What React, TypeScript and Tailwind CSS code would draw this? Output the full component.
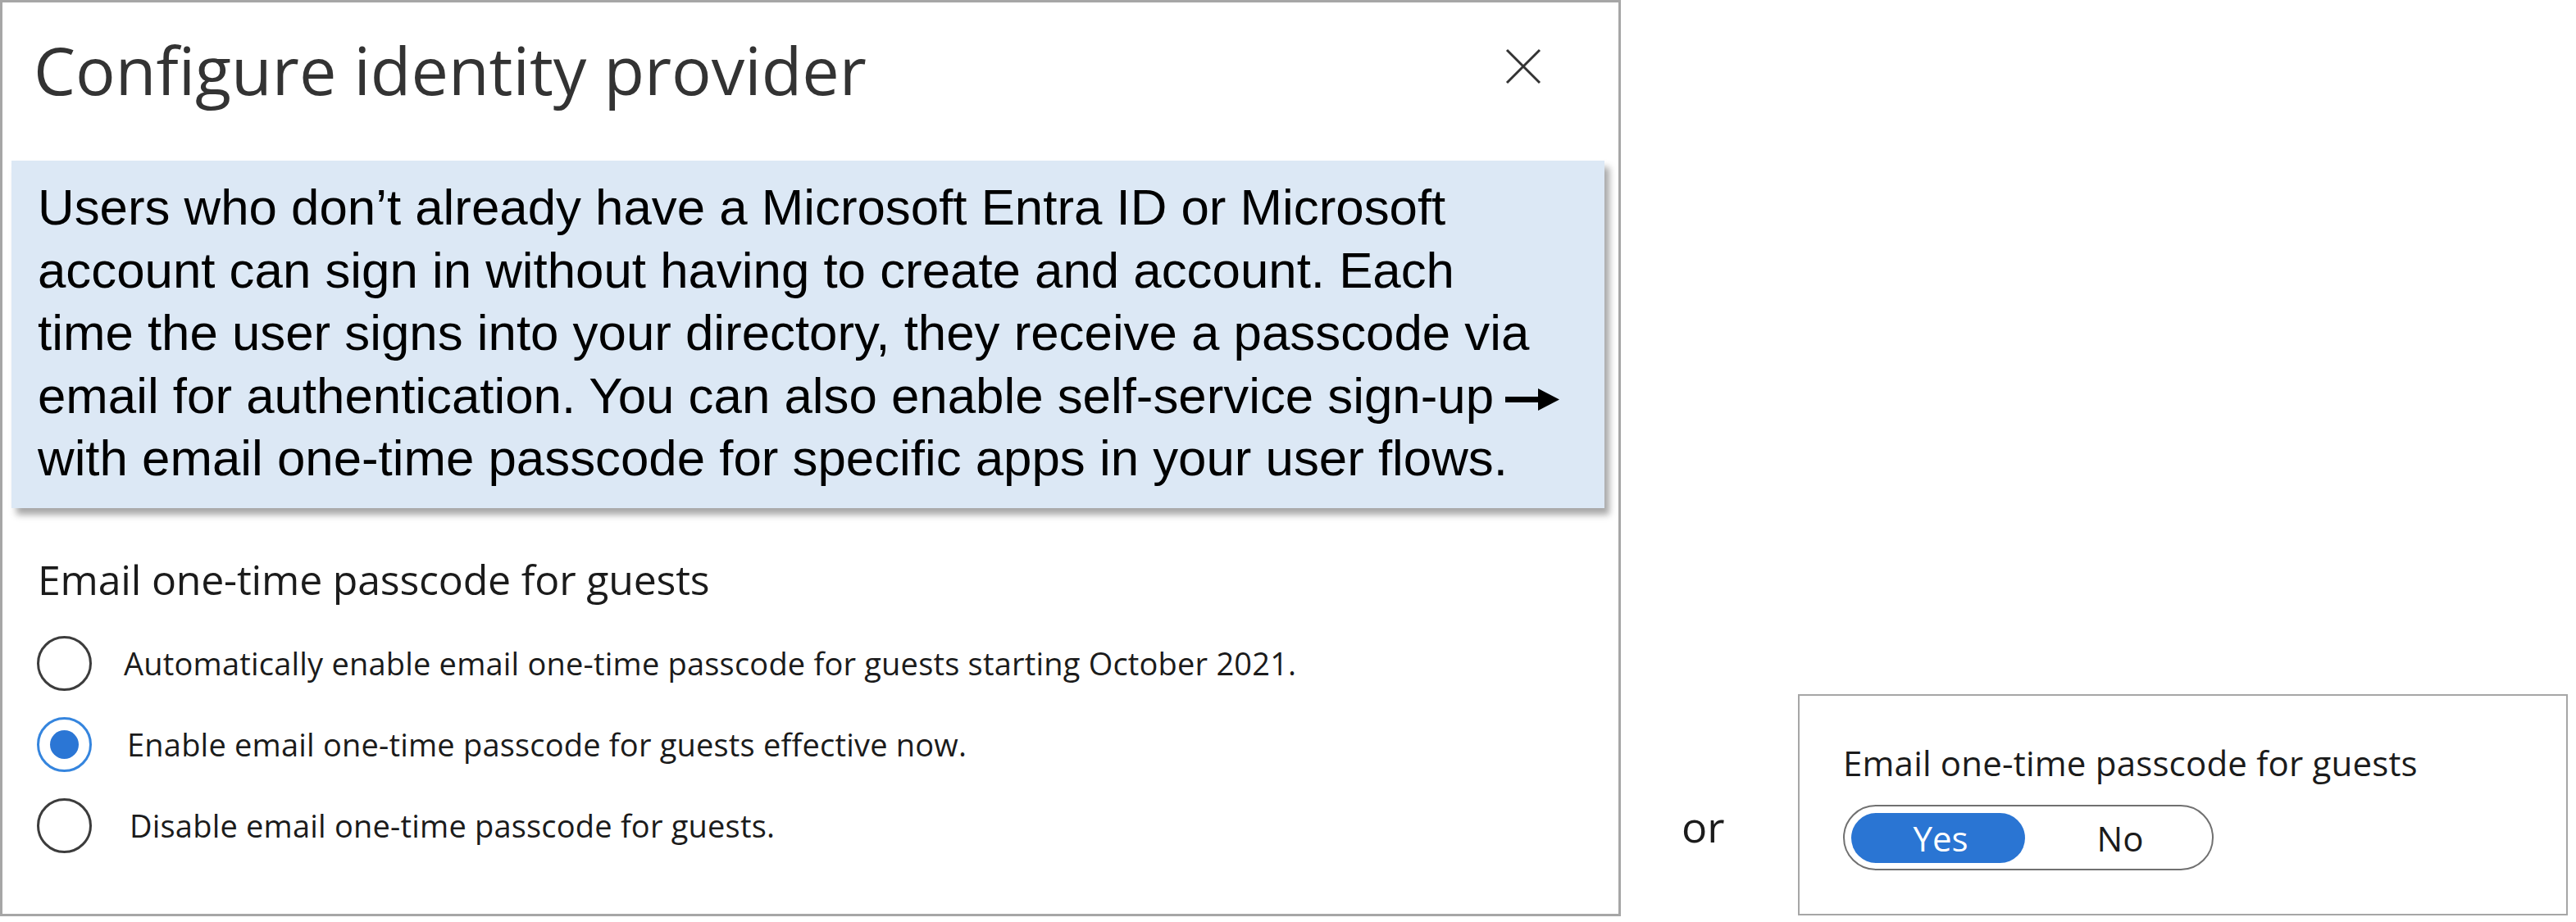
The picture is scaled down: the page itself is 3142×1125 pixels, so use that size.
const ui = { fontFamily: '"Open Sans", "Noto Sans", sans-serif' };
const note = { fontFamily: '"Liberation Sans", Arial, sans-serif' };

const noteLines = [
  "Users who don’t already have a Microsoft Entra ID or Microsoft",
  "account can sign in without having to create and account. Each",
  "time the user signs into your directory, they receive a passcode via",
  "email for authentication. You can also enable self-service sign-up",
  "with email one-time passcode for specific apps in your user flows.",
];

const options = [
  { label: "Automatically enable email one-time passcode for guests starting October 2021.", checked: false, gap: "ml-[39px]" },
  { label: "Enable email one-time passcode for guests effective now.", checked: true, gap: "ml-[43px]" },
  { label: "Disable email one-time passcode for guests.", checked: false, gap: "ml-[46px]" },
];

function Radio({ checked }: { checked: boolean }) {
  if (checked) {
    return (
      <span className="flex h-[67px] w-[67px] shrink-0 items-center justify-center rounded-full border-[3px] border-[#3585de]">
        <span className="h-[35px] w-[35px] rounded-full bg-[#2b76d5]" />
      </span>
    );
  }
  return <span className="h-[67px] w-[67px] shrink-0 rounded-full border-[3px] border-[#3c3c3c]" />;
}

function Arrow() {
  return (
    <svg width="66" height="30" viewBox="0 0 66 30" className="ml-[14px] inline-block align-middle">
      <rect x="0" y="12" width="44" height="7" fill="#000" />
      <polygon points="40,2 66,15.5 40,29" fill="#000" />
    </svg>
  );
}

export default function App() {
  return (
    <div className="flex h-[1125px] w-[3142px] bg-white">
      {/* dialog */}
      <div className="flex h-[1118px] w-[1977px] shrink-0 flex-col border-[3px] border-[#a6a6a6]" style={ui}>
        <div className="flex items-center justify-between pl-[38px] pr-[94px] pt-[32px]">
          <h1 className="text-[81px] leading-[100px] text-[#333333]">Configure identity provider</h1>
          <svg width="44" height="44" viewBox="0 0 44 44" className="mb-[8px]">
            <path d="M2 2 L42 42 M42 2 L2 42" stroke="#333" strokeWidth="3" fill="none" />
          </svg>
        </div>

        <div
          className="ml-[11px] mr-[17px] mt-[61px] bg-[#dce8f5] pb-[22px] pl-[32px] pt-[19px] text-[61.8px] leading-[76.5px] text-black shadow-[6px_8px_8px_rgba(0,0,0,0.35)]"
          style={note}
        >
          {noteLines.map((l, i) => (
            <div key={i} className="whitespace-nowrap">
              {l}
              {i === 3 && <Arrow />}
            </div>
          ))}
        </div>

        <h2 className="ml-[43px] mt-[53px] text-[50px] leading-[68px] tracking-[-0.2px] text-[#1b1b1b]">
          Email one-time passcode for guests
        </h2>
        <div className="mt-[19px] flex flex-col">
          {options.map((o) => (
            <div key={o.label} className="flex h-[99px] items-center pl-[42px]">
              <Radio checked={o.checked} />
              <span className={`${o.gap} whitespace-nowrap text-[38px] tracking-[0.2px] text-[#1b1b1b]`}>{o.label}</span>
            </div>
          ))}
        </div>
      </div>

      {/* alternative */}
      <div className="flex flex-1 items-end pb-[8px] pl-[74px]" style={ui}>
        <span className="mb-[83px] text-[52px] leading-none text-[#1b1b1b]">or</span>
        <div className="ml-auto mr-[10px] h-[270px] w-[939px] border-[2px] border-[#a6a6a6] pl-[53px] pt-[53px]">
          <div className="text-[42px] leading-[57px] tracking-[0.2px] text-[#1b1b1b]">Email one-time passcode for guests</div>
          <div className="mt-[23px] flex h-[80px] w-[452px] items-center rounded-full border-[2px] border-[#707070] pl-[8px]">
            <span className="flex h-[61px] w-[212px] items-center justify-center rounded-full bg-[#2a75d3] pl-[6px] text-[42px] text-white">
              Yes
            </span>
            <span className="flex-1 pl-[4px] text-center text-[42px] text-[#1b1b1b]">No</span>
          </div>
        </div>
      </div>
    </div>
  );
}
